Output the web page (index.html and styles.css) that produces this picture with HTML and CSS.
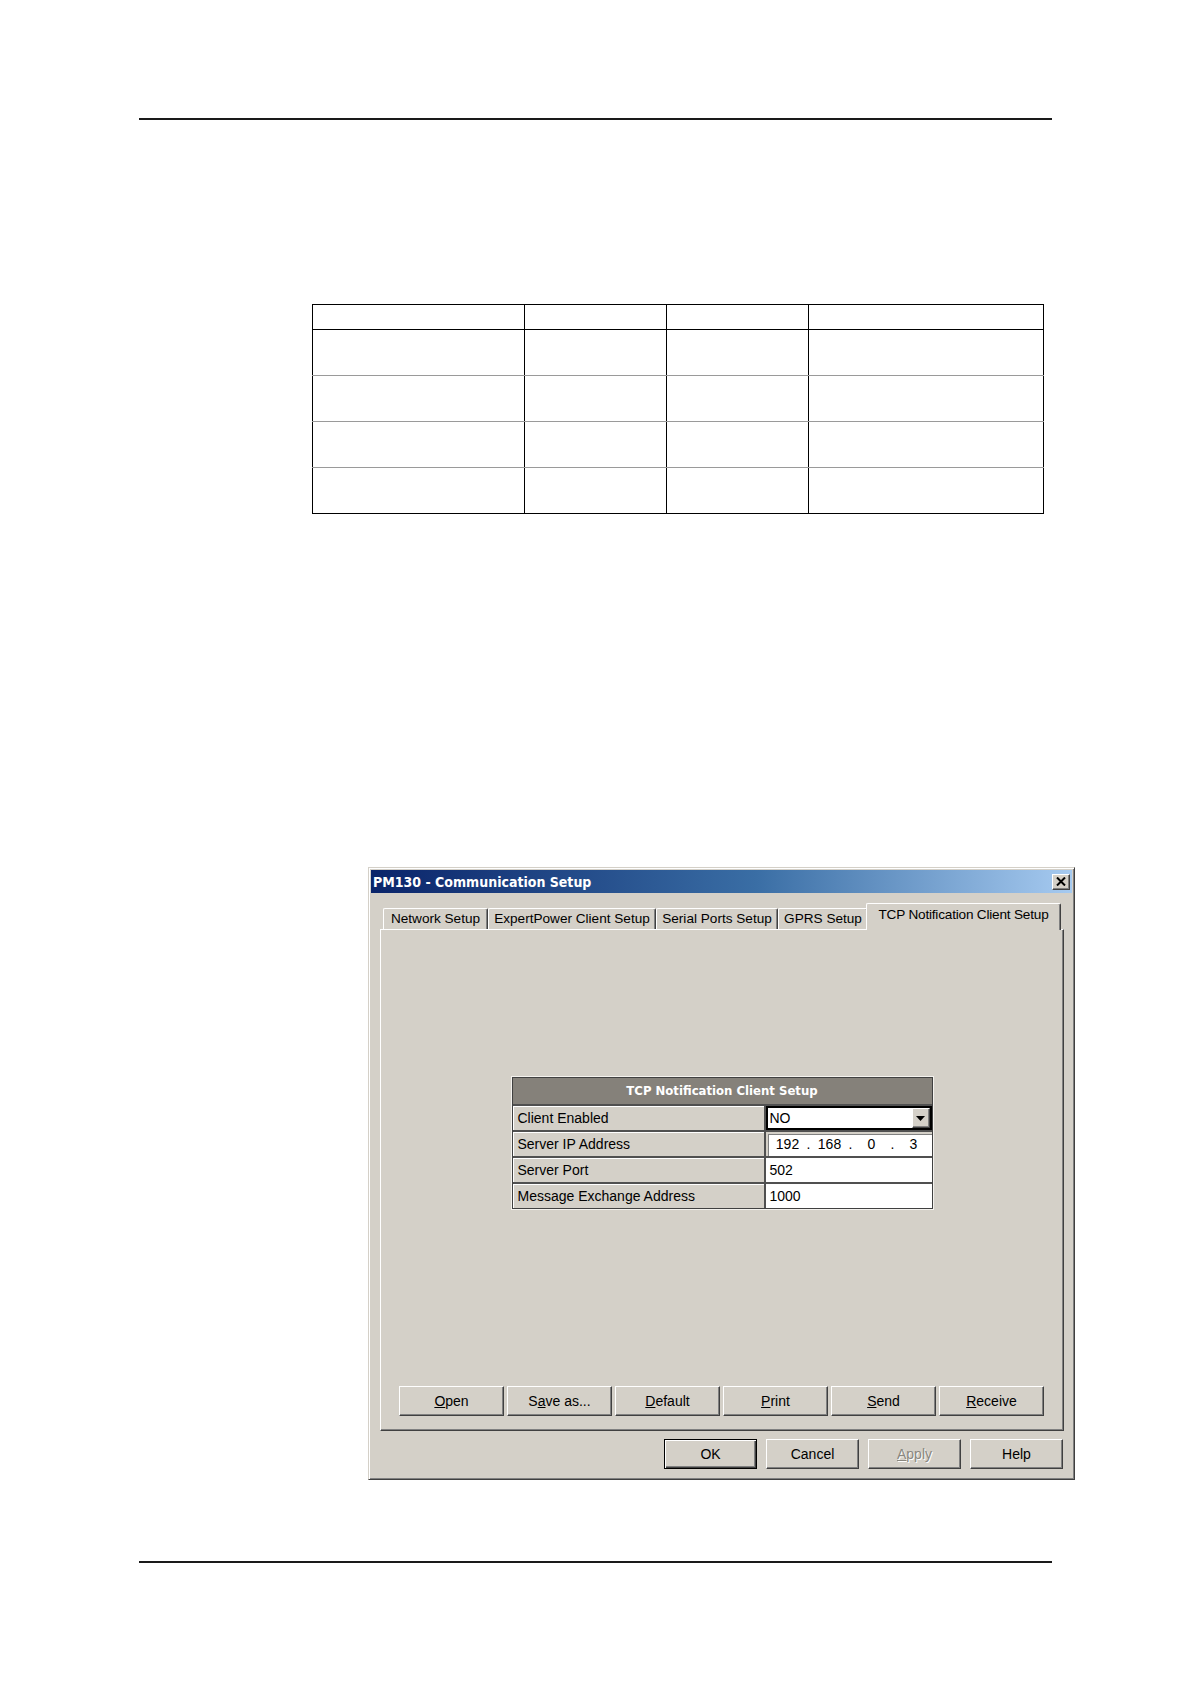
FILE: index.html
```html
<!DOCTYPE html>
<html>
<head>
<meta charset="utf-8">
<title>PM130 - Communication Setup</title>
<link rel="stylesheet" href="styles.css">
</head>
<body>
<div class="page">
  <div class="rule rule-top"></div>

  <table class="grid">
    <colgroup>
      <col class="c1"><col class="c2"><col class="c3"><col class="c4">
    </colgroup>
    <tr class="head"><td></td><td></td><td></td><td></td></tr>
    <tr class="row first"><td></td><td></td><td></td><td></td></tr>
    <tr class="row"><td></td><td></td><td></td><td></td></tr>
    <tr class="row"><td></td><td></td><td></td><td></td></tr>
    <tr class="row"><td></td><td></td><td></td><td></td></tr>
  </table>

  <div class="dialog">
    <div class="titlebar">
      <span class="title">PM130 - Communication Setup</span>
      <span class="close">
        <svg width="10" height="9" viewBox="0 0 10 9"><path d="M1 0.5 L9 8.5 M9 0.5 L1 8.5" stroke="#000" stroke-width="2" fill="none"/></svg>
      </span>
    </div>

    <div class="tabs">
      <div class="tab t-net">Network Setup</div>
      <div class="tab t-exp">ExpertPower Client Setup</div>
      <div class="tab t-ser">Serial Ports Setup</div>
      <div class="tab t-gprs">GPRS Setup</div>
      <div class="tab active t-tcp">TCP Notification Client Setup</div>
    </div>

    <div class="panel">
      <div class="setup">
        <div class="setup-head">TCP Notification Client Setup</div>
        <div class="lbl">Client Enabled</div>
        <div class="val combo"><span>NO</span><span class="drop"><svg width="9" height="5" viewBox="0 0 9 5"><path d="M0 0 H9 L4.5 5 Z" fill="#000"/></svg></span></div>
        <div class="lbl">Server IP Address</div>
        <div class="val ip"><span class="oct">192</span><span class="dot">.</span><span class="oct">168</span><span class="dot">.</span><span class="oct">0</span><span class="dot">.</span><span class="oct">3</span></div>
        <div class="lbl">Server Port</div>
        <div class="val">502</div>
        <div class="lbl">Message Exchange Address</div>
        <div class="val">1000</div>
      </div>

      <div class="btnrow">
        <div class="btn"><u>O</u>pen</div>
        <div class="btn">S<u>a</u>ve as...</div>
        <div class="btn"><u>D</u>efault</div>
        <div class="btn"><u>P</u>rint</div>
        <div class="btn"><u>S</u>end</div>
        <div class="btn"><u>R</u>eceive</div>
      </div>
    </div>

    <div class="footer">
      <div class="btn fbtn default">OK</div>
      <div class="btn fbtn">Cancel</div>
      <div class="btn fbtn disabled"><u>A</u>pply</div>
      <div class="btn fbtn">Help</div>
    </div>
  </div>

  <div class="rule rule-bottom"></div>
</div>
</body>
</html>
```

FILE: styles.css
```css
html, body {
  margin: 0;
  padding: 0;
  background: #ffffff;
}

.page {
  width: 913px;
  padding-left: 139px;
  padding-top: 118px;
  padding-bottom: 120px;
  font-family: "Liberation Sans", Arial, sans-serif;
}

.rule {
  height: 2px;
  background: #1a1a1a;
}

.rule-bottom {
  margin-top: 81px;
}

/* empty document table */
.grid {
  margin: 184px 0 0 173px;
  width: 731px;
  border-collapse: collapse;
  table-layout: fixed;
}
.grid col.c1 { width: 212px; }
.grid col.c2 { width: 142px; }
.grid col.c3 { width: 142px; }
.grid col.c4 { width: 235px; }

.grid td {
  border: 1px solid #000;
  padding: 0;
}
.grid tr.head td {
  height: 24px;
}
.grid tr.row td {
  height: 45px;
  border-top: 1px solid #9a9a9a;
  border-bottom: 1px solid #9a9a9a;
}
.grid tr.row.first td {
  border-top: 1px solid #000;
}
.grid tr.row:last-child td {
  border-bottom: 1px solid #000;
}

/* dialog */
.dialog {
  margin: 353px 0 0 229px;
  width: 707px;
  height: 613px;
  box-sizing: border-box;
  background: #d4d0c8;
  border: 1px solid;
  border-color: #d4d0c8 #404040 #404040 #d4d0c8;
  box-shadow: inset 1px 1px #ffffff, inset -1px -1px #808080;
  padding: 2px;
  display: flex;
  flex-direction: column;
}

.titlebar {
  height: 23px;
  flex: none;
  background: linear-gradient(to right, #0a246a 0%, #3a6ea5 55%, #a6caf0 100%);
  display: flex;
  align-items: center;
  justify-content: space-between;
  padding: 0 2px 0 2px;
}
.title {
  color: #ffffff;
  font-family: "DejaVu Sans Condensed", "DejaVu Sans", Verdana, sans-serif;
  font-stretch: condensed;
  font-weight: bold;
  font-size: 14px;
}
.close {
  width: 18px;
  height: 16px;
  box-sizing: border-box;
  background: #d4d0c8;
  border: 1px solid;
  border-color: #ffffff #404040 #404040 #ffffff;
  box-shadow: inset -1px -1px #808080;
  display: flex;
  align-items: center;
  justify-content: center;
}

.tabs {
  flex: none;
  height: 26px;
  margin: 10px 8px 0 9px;
  padding-left: 3px;
  display: flex;
  align-items: flex-end;
  position: relative;
  z-index: 1;
}
.tab {
  height: 21px;
  box-sizing: border-box;
  border-top: 1px solid #ffffff;
  border-left: 1px solid #ffffff;
  border-right: 1px solid #404040;
  box-shadow: inset -1px 0 #808080;
  border-radius: 2px 2px 0 0;
  font-size: 13.6px;
  line-height: 20px;
  text-align: center;
  color: #000;
  background: #d4d0c8;
  white-space: nowrap;
}
.t-net { width: 105px; }
.t-exp { width: 168px; }
.t-ser { width: 122px; }
.t-gprs { width: 90px; }
.tab.active {
  width: 195px;
  height: 27px;
  margin-left: -2px;
  margin-bottom: -1px;
  line-height: 21px;
  letter-spacing: -0.2px;
}

.panel {
  flex: none;
  height: 502px;
  box-sizing: border-box;
  margin: 0 8px 0 9px;
  border: 1px solid;
  border-color: #ffffff #404040 #404040 #ffffff;
  box-shadow: inset -1px -1px #808080;
  display: flex;
  flex-direction: column;
}

.setup {
  margin: 147px auto 0 auto;
  width: 421px;
  box-sizing: border-box;
  border: 1px solid #404040;
  box-shadow: 0 0 0 1px #f4f2ee;
  background: #505050;
  display: grid;
  grid-template-columns: 251px 166px;
  grid-template-rows: 26px repeat(4, 24px);
  gap: 2px;
  font-size: 14px;
}
.setup-head {
  grid-column: 1 / span 2;
  background: #85817a;
  color: #ffffff;
  font-family: "DejaVu Sans Condensed", "DejaVu Sans", Verdana, sans-serif;
  font-stretch: condensed;
  font-weight: bold;
  font-size: 13px;
  line-height: 26px;
  text-align: center;
}
.lbl {
  background: #d4d0c8;
  padding-left: 5px;
  line-height: 24px;
  color: #000;
  box-shadow: inset 1px 1px #ffffff;
}
.val {
  background: #ffffff;
  padding-left: 4px;
  line-height: 24px;
  color: #000;
}
.combo {
  box-shadow: inset 0 0 0 2px #000;
  display: flex;
  justify-content: space-between;
  align-items: center;
  padding: 0 2px 0 4px;
  line-height: 20px;
}
.drop {
  width: 18px;
  height: 20px;
  box-sizing: border-box;
  background: #d4d0c8;
  border: 1px solid;
  border-color: #ffffff #404040 #404040 #ffffff;
  box-shadow: inset -1px -1px #808080;
  display: flex;
  align-items: center;
  justify-content: center;
}
.ip {
  display: flex;
  align-items: center;
  padding-left: 6px;
  box-shadow: inset 2px 2px #d4d0c8, inset 3px 3px #808080;
}
.oct {
  width: 32px;
  text-align: center;
}
.dot {
  width: 10px;
  text-align: center;
}

.btnrow {
  margin-top: auto;
  padding: 0 19px 14px 18px;
  display: flex;
  gap: 3px;
}
.btn {
  height: 30px;
  box-sizing: border-box;
  background: #d4d0c8;
  border: 1px solid;
  border-color: #ffffff #404040 #404040 #ffffff;
  box-shadow: inset -1px -1px #808080;
  font-size: 14px;
  color: #000;
  display: flex;
  align-items: center;
  justify-content: center;
}
.btnrow .btn {
  flex: 1;
}

.footer {
  flex: none;
  margin-top: 8px;
  padding-right: 9px;
  display: flex;
  justify-content: flex-end;
  gap: 9px;
}
.fbtn {
  width: 93px;
}
.fbtn.default {
  border: 1px solid #000;
  box-shadow: inset 1px 1px #ffffff, inset -1px -1px #404040, inset -2px -2px #808080;
}
.fbtn.disabled {
  color: #8a877f;
  text-shadow: 1px 1px #ffffff;
}
```
